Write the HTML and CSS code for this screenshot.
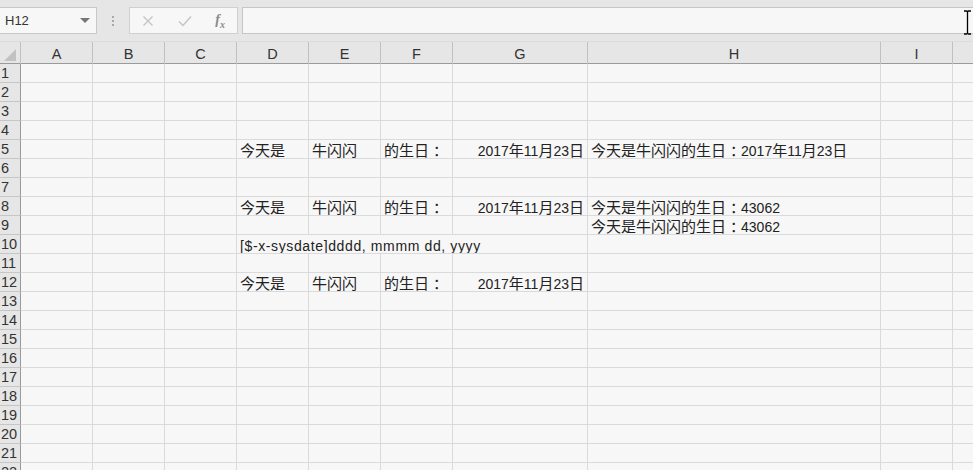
FILE: index.html
```html
<!DOCTYPE html>
<html lang="zh">
<head>
<meta charset="utf-8">
<title>Sheet</title>
<link rel="stylesheet" href="styles.css">
</head>
<body>
<div class="app">
  <div class="toolbar">
    <div class="namebox"><span class="name">H12</span><span class="caret"></span></div>
    <div class="grip"><i></i><i></i><i></i></div>
    <div class="fxgroup">
      <svg class="ico" width="14" height="14" viewBox="0 0 14 14"><path d="M2.5 2.5 L11.5 11.5 M11.5 2.5 L2.5 11.5" stroke="#c4c4c4" stroke-width="1.4" fill="none"/></svg>
      <svg class="ico" width="16" height="14" viewBox="0 0 16 14"><path d="M2 7.5 L6 11.5 L14 2.5" stroke="#c4c4c4" stroke-width="1.4" fill="none"/></svg>
      <span class="fx">f<sub>x</sub></span>
    </div>
    <div class="formula"></div>
  </div>
  <div class="sheet">
    <div class="row head">
      <div class="corner"><span class="tri"></span></div>
      <div class="ch">A</div><div class="ch">B</div><div class="ch">C</div><div class="ch">D</div><div class="ch">E</div><div class="ch">F</div><div class="ch">G</div><div class="ch">H</div><div class="ch">I</div><div class="ch"></div>
    </div>
    <div class="row"><div class="rh">1</div><div class="c"></div><div class="c"></div><div class="c"></div><div class="c"></div><div class="c"></div><div class="c"></div><div class="c"></div><div class="c"></div><div class="c"></div><div class="c"></div></div>
    <div class="row"><div class="rh">2</div><div class="c"></div><div class="c"></div><div class="c"></div><div class="c"></div><div class="c"></div><div class="c"></div><div class="c"></div><div class="c"></div><div class="c"></div><div class="c"></div></div>
    <div class="row"><div class="rh">3</div><div class="c"></div><div class="c"></div><div class="c"></div><div class="c"></div><div class="c"></div><div class="c"></div><div class="c"></div><div class="c"></div><div class="c"></div><div class="c"></div></div>
    <div class="row"><div class="rh">4</div><div class="c"></div><div class="c"></div><div class="c"></div><div class="c"></div><div class="c"></div><div class="c"></div><div class="c"></div><div class="c"></div><div class="c"></div><div class="c"></div></div>
    <div class="row"><div class="rh">5</div><div class="c"></div><div class="c"></div><div class="c"></div><div class="c"><span class="zh">今天是</span></div><div class="c"><span class="zh">牛闪闪</span></div><div class="c"><span class="zh">的生日</span><span class="colon">：</span></div><div class="c num">2017<span class="zh">年</span>11<span class="zh">月</span>23<span class="zh">日</span></div><div class="c"><span class="zh">今天是牛闪闪的生日</span><span class="colon">：</span>2017<span class="zh">年</span>11<span class="zh">月</span>23<span class="zh">日</span></div><div class="c"></div><div class="c"></div></div>
    <div class="row"><div class="rh">6</div><div class="c"></div><div class="c"></div><div class="c"></div><div class="c"></div><div class="c"></div><div class="c"></div><div class="c"></div><div class="c"></div><div class="c"></div><div class="c"></div></div>
    <div class="row"><div class="rh">7</div><div class="c"></div><div class="c"></div><div class="c"></div><div class="c"></div><div class="c"></div><div class="c"></div><div class="c"></div><div class="c"></div><div class="c"></div><div class="c"></div></div>
    <div class="row"><div class="rh">8</div><div class="c"></div><div class="c"></div><div class="c"></div><div class="c"><span class="zh">今天是</span></div><div class="c"><span class="zh">牛闪闪</span></div><div class="c"><span class="zh">的生日</span><span class="colon">：</span></div><div class="c num">2017<span class="zh">年</span>11<span class="zh">月</span>23<span class="zh">日</span></div><div class="c"><span class="zh">今天是牛闪闪的生日</span><span class="colon">：</span>43062</div><div class="c"></div><div class="c"></div></div>
    <div class="row"><div class="rh">9</div><div class="c"></div><div class="c"></div><div class="c"></div><div class="c"></div><div class="c"></div><div class="c"></div><div class="c"></div><div class="c"><span class="zh">今天是牛闪闪的生日</span><span class="colon">：</span>43062</div><div class="c"></div><div class="c"></div></div>
    <div class="row"><div class="rh">10</div><div class="c"></div><div class="c"></div><div class="c"></div><div class="c span4 fmt">[$-x-sysdate]dddd, mmmm dd, yyyy</div><div class="c"></div><div class="c"></div><div class="c"></div></div>
    <div class="row"><div class="rh">11</div><div class="c"></div><div class="c"></div><div class="c"></div><div class="c"></div><div class="c"></div><div class="c"></div><div class="c"></div><div class="c"></div><div class="c"></div><div class="c"></div></div>
    <div class="row"><div class="rh">12</div><div class="c"></div><div class="c"></div><div class="c"></div><div class="c"><span class="zh">今天是</span></div><div class="c"><span class="zh">牛闪闪</span></div><div class="c"><span class="zh">的生日</span><span class="colon">：</span></div><div class="c num">2017<span class="zh">年</span>11<span class="zh">月</span>23<span class="zh">日</span></div><div class="c"></div><div class="c"></div><div class="c"></div></div>
    <div class="row"><div class="rh">13</div><div class="c"></div><div class="c"></div><div class="c"></div><div class="c"></div><div class="c"></div><div class="c"></div><div class="c"></div><div class="c"></div><div class="c"></div><div class="c"></div></div>
    <div class="row"><div class="rh">14</div><div class="c"></div><div class="c"></div><div class="c"></div><div class="c"></div><div class="c"></div><div class="c"></div><div class="c"></div><div class="c"></div><div class="c"></div><div class="c"></div></div>
    <div class="row"><div class="rh">15</div><div class="c"></div><div class="c"></div><div class="c"></div><div class="c"></div><div class="c"></div><div class="c"></div><div class="c"></div><div class="c"></div><div class="c"></div><div class="c"></div></div>
    <div class="row"><div class="rh">16</div><div class="c"></div><div class="c"></div><div class="c"></div><div class="c"></div><div class="c"></div><div class="c"></div><div class="c"></div><div class="c"></div><div class="c"></div><div class="c"></div></div>
    <div class="row"><div class="rh">17</div><div class="c"></div><div class="c"></div><div class="c"></div><div class="c"></div><div class="c"></div><div class="c"></div><div class="c"></div><div class="c"></div><div class="c"></div><div class="c"></div></div>
    <div class="row"><div class="rh">18</div><div class="c"></div><div class="c"></div><div class="c"></div><div class="c"></div><div class="c"></div><div class="c"></div><div class="c"></div><div class="c"></div><div class="c"></div><div class="c"></div></div>
    <div class="row"><div class="rh">19</div><div class="c"></div><div class="c"></div><div class="c"></div><div class="c"></div><div class="c"></div><div class="c"></div><div class="c"></div><div class="c"></div><div class="c"></div><div class="c"></div></div>
    <div class="row"><div class="rh">20</div><div class="c"></div><div class="c"></div><div class="c"></div><div class="c"></div><div class="c"></div><div class="c"></div><div class="c"></div><div class="c"></div><div class="c"></div><div class="c"></div></div>
    <div class="row"><div class="rh">21</div><div class="c"></div><div class="c"></div><div class="c"></div><div class="c"></div><div class="c"></div><div class="c"></div><div class="c"></div><div class="c"></div><div class="c"></div><div class="c"></div></div>
    <div class="row"><div class="rh">22</div><div class="c"></div><div class="c"></div><div class="c"></div><div class="c"></div><div class="c"></div><div class="c"></div><div class="c"></div><div class="c"></div><div class="c"></div><div class="c"></div></div>
  </div>
  <svg class="ibeam" width="9" height="25" viewBox="0 0 9 25"><path d="M1 1 H3.5 Q4.5 1 4.5 2.5 V22.5 Q4.5 24 3.5 24 H1 M8 1 H5.5 Q4.5 1 4.5 2.5 M4.5 22.5 Q4.5 24 5.5 24 H8" stroke="#000" stroke-width="1.3" fill="none"/></svg>
</div>
</body>
</html>
```

FILE: styles.css
```css
* { box-sizing: border-box; }
html, body { margin: 0; padding: 0; }
body {
  width: 973px;
  height: 470px;
  overflow: hidden;
  background: #f7f7f7;
  font-family: "Liberation Sans", "Noto Sans CJK SC", sans-serif;
  color: #222;
}
.app { position: relative; width: 973px; height: 470px; overflow: hidden; }

.toolbar {
  height: 42px;
  background: #e6e6e6;
  display: flex;
  align-items: flex-start;
  padding-top: 7px;
  border-bottom: 1px solid #dcdcdc;
}
.namebox {
  width: 98px;
  height: 27px;
  margin-left: -1px;
  background: #f7f7f7;
  border: 1px solid #c8c8c8;
  display: flex;
  align-items: center;
  justify-content: space-between;
  padding: 0 6px 0 5px;
}
.name { font-size: 13px; color: #333; }
.caret {
  width: 0; height: 0;
  border-left: 5px solid transparent;
  border-right: 5px solid transparent;
  border-top: 5px solid #777;
}
.grip {
  width: 32px;
  height: 27px;
  display: flex;
  flex-direction: column;
  align-items: center;
  justify-content: center;
  gap: 2px;
}
.grip i { display: block; width: 2px; height: 2px; background: #a8a8a8; }
.fxgroup {
  width: 109px;
  height: 27px;
  background: #f7f7f7;
  border: 1px solid #d0d0d0;
  display: flex;
  align-items: center;
  justify-content: space-between;
  padding: 0 12px 0 11px;
}
.fx {
  font-family: "Liberation Serif", serif;
  font-style: italic;
  font-weight: bold;
  font-size: 14px;
  color: #8a8a8a;
}
.fx sub { font-size: 10px; }
.formula {
  margin-left: 4px;
  flex: 1;
  height: 27px;
  background: #f7f7f7;
  border: 1px solid #c6c6c6;
  margin-right: -4px;
}

.sheet { background: #f7f7f7; }
.row {
  display: grid;
  grid-template-columns: 21px 72px 72px 72px 72px 72px 72px 135px 293px 72px 72px;
  height: 19px;
}
.row.head {
  height: 22px;
  background: #e6e6e6;
  border-bottom: 1px solid #9a9a9a;
}
.corner {
  position: relative;
  border-right: 1px solid #c0c0c0;
}
.tri {
  position: absolute;
  right: 4px;
  bottom: 3px;
  width: 0; height: 0;
  border-left: 12px solid transparent;
  border-bottom: 12px solid #c2c2c2;
}
.ch {
  border-right: 1px solid #c0c0c0;
  text-align: center;
  font-size: 14.5px;
  line-height: 19px;
  padding-top: 3px;
  color: #333;
}
.rh {
  background: #e6e6e6;
  border-right: 1px solid #9a9a9a;
  border-bottom: 1px solid #c6c6c6;
  font-size: 14.5px;
  line-height: 19px;
  color: #333;
  padding-left: 1px;
  overflow: hidden;
  white-space: nowrap;
}
.c {
  border-right: 1px solid #dadada;
  border-bottom: 1px solid #dadada;
  font-size: 14px;
  line-height: 18px;
  padding: 2px 3px 0 3px;
  white-space: nowrap;
  overflow: hidden;
}
.zh { font-size: 15px; }
.colon { font-size: 15px; padding-left: 4px; letter-spacing: -4px; }
.c.num { text-align: right; }
.c.span4 { grid-column: span 4; }
.c.fmt { letter-spacing: 0.62px; }

.ibeam { position: absolute; left: 963px; top: 10px; }
```
